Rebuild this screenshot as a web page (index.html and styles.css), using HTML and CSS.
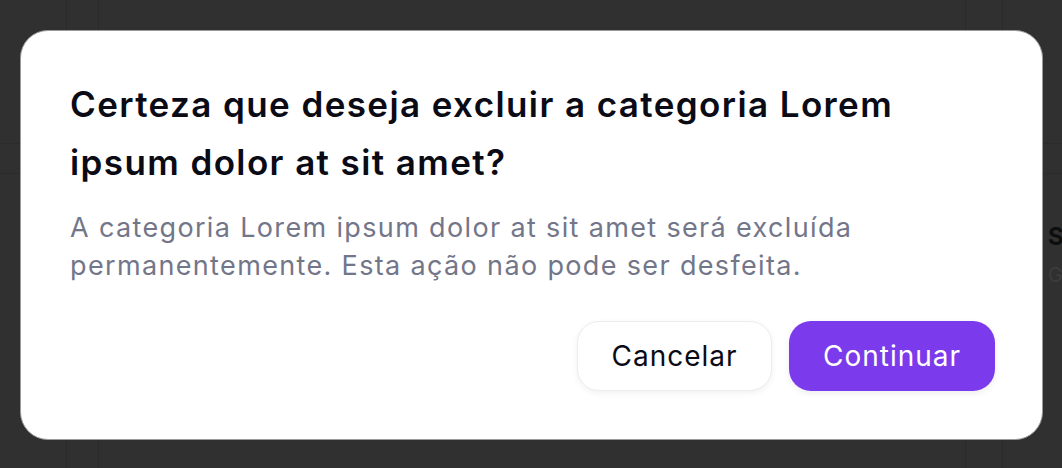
FILE: index.html
```html
<!DOCTYPE html>
<html lang="pt-BR">

<head>
    <meta charset="UTF-8">
    <meta name="viewport" content="width=device-width, initial-scale=1.0">
    <title>Excluir categoria</title>
    <link rel="stylesheet" href="styles.css">
</head>

<body>

    <div class="backdrop">
        <span class="bg-title">S</span>
        <span class="bg-sub">G</span>
    </div>

    <div class="overlay">
        <div class="dialog" role="alertdialog">
            <h2 class="dialog-title">Certeza que deseja excluir a categoria Lorem ipsum dolor at sit amet?</h2>
            <p class="dialog-text">A categoria Lorem ipsum dolor at sit amet será excluída permanentemente. Esta ação não pode ser desfeita.</p>
            <div class="dialog-actions">
                <button class="btn btn-cancel">Cancelar</button>
                <button class="btn btn-confirm">Continuar</button>
            </div>
        </div>
    </div>

</body>

</html>
```

FILE: styles.css
```css
* {
    box-sizing: border-box;
}

body {
    margin: 0;
    height: 468px;
    overflow: hidden;
    font-family: Inter, "Open Sans", sans-serif;
    background-color: #303030;
    background-image:
        linear-gradient(#2a2a2a, #2a2a2a),
        linear-gradient(#2a2a2a, #2a2a2a),
        linear-gradient(#2a2a2a, #2a2a2a),
        linear-gradient(#2a2a2a, #2a2a2a),
        linear-gradient(#2b2b2b, #2b2b2b),
        linear-gradient(#2b2b2b, #2b2b2b);
    background-size: 1px 100%, 1px 100%, 1px 100%, 1px 100%, 100% 1px, 100% 1px;
    background-position: 66px 0, 98px 0, 965px 0, 1002px 0, 0 143px, 0 173px;
    background-repeat: no-repeat;
}

.backdrop {
    height: 100%;
    padding-left: 1048px;
    padding-top: 222px;
    display: flex;
    flex-direction: column;
    gap: 12px;
}

.bg-title {
    font-size: 24px;
    font-weight: 700;
    color: #0e0e0e;
}

.bg-sub {
    font-size: 20px;
    color: #3c3c3c;
}

.overlay {
    position: fixed;
    inset: 0;
    padding: 30px 19px 28px 20px;
    display: flex;
}

.dialog {
    flex: 1;
    background: #fff;
    border: 1px solid #9a9a9a;
    border-radius: 28px;
    padding: 44px 47px 48px 49px;
    display: flex;
    flex-direction: column;
}

.dialog-title {
    margin: 0;
    font-size: 35px;
    font-weight: 600;
    line-height: 58px;
    letter-spacing: 1.4px;
    color: #0b0b16;
    max-width: 900px;
}

.dialog-text {
    margin: 18px 0 0;
    font-size: 27px;
    line-height: 38px;
    letter-spacing: 1.35px;
    color: #737689;
    max-width: 900px;
}

.dialog-actions {
    margin-top: auto;
    display: flex;
    justify-content: flex-end;
    gap: 17px;
}

.btn {
    height: 70px;
    padding: 0;
    border-radius: 22px;
    font-family: inherit;
    font-size: 28px;
    letter-spacing: 1px;
    cursor: pointer;
}

.btn-cancel {
    width: 195px;
    background: #fff;
    color: #0b0b16;
    border: 1px solid #ececec;
    box-shadow: 0 2px 6px rgba(0, 0, 0, 0.06);
}

.btn-confirm {
    width: 206px;
    background: #7b3aeb;
    color: #fff;
    border: none;
    box-shadow: 0 2px 6px rgba(0, 0, 0, 0.08);
}
```
